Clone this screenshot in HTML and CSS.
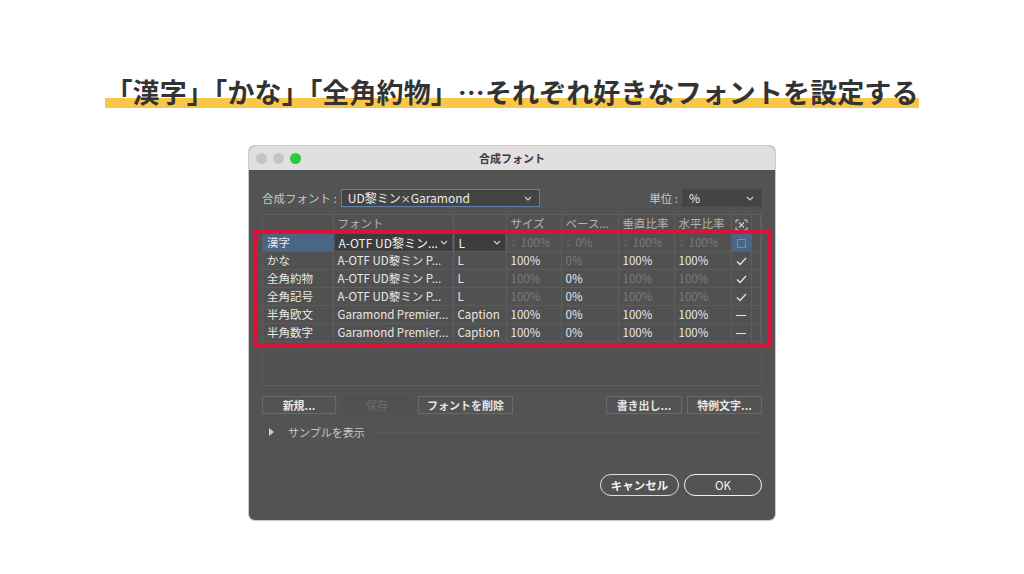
FILE: index.html
```html
<!DOCTYPE html>
<html lang="ja">

<head>
    <meta charset="UTF-8">
    <meta name="viewport" content="width=device-width, initial-scale=1.0">
    <title>合成フォント</title>
    <link rel="stylesheet" href="styles.css">
</head>

<body>
    <main class="page">
        <h1 class="headline"><span>「漢字」「かな」「全角約物」…それぞれ好きなフォントを設定する</span></h1>

        <section class="window">
            <div class="titlebar">
                <div class="lights">
                    <span class="light"></span>
                    <span class="light"></span>
                    <span class="light green"></span>
                </div>
                <div class="title">合成フォント</div>
            </div>

            <div class="window_inner">
                <div class="form-row">
                    <div class="field">
                        <label>合成フォント :</label>
                        <div class="select select-font focus">UD黎ミン<span class="times">×</span>Garamond
                            <svg class="chev" width="8" height="5" viewBox="0 0 8 5"><path d="M1 1l3 3 3-3" fill="none" stroke="#cfcfcf" stroke-width="1.2"/></svg>
                        </div>
                    </div>
                    <div class="field">
                        <label>単位 :</label>
                        <div class="select select-unit">%
                            <svg class="chev" width="8" height="5" viewBox="0 0 8 5"><path d="M1 1l3 3 3-3" fill="none" stroke="#cfcfcf" stroke-width="1.2"/></svg>
                        </div>
                    </div>
                </div>

                <div class="table-wrap">
                    <table class="ft-table">
                        <colgroup>
                            <col style="width:70px">
                            <col style="width:120px">
                            <col style="width:53px">
                            <col style="width:55px">
                            <col style="width:57px">
                            <col style="width:56px">
                            <col style="width:57px">
                            <col style="width:20px">
                            <col>
                        </colgroup>
                        <thead>
                            <tr>
                                <th></th>
                                <th>フォント</th>
                                <th></th>
                                <th>サイズ</th>
                                <th>ベース...</th>
                                <th>垂直比率</th>
                                <th>水平比率</th>
                                <th class="icon-col">
                                    <svg width="13" height="12" viewBox="0 0 13 12">
                                        <path d="M1 4V1h3M9 1h3v3M12 8v3H9M4 11H1V8" fill="none" stroke="#cfcfcf" stroke-width="1"/>
                                        <path d="M4 3.5l5 5M9 3.5l-5 5" stroke="#cfcfcf" stroke-width="1.1"/>
                                    </svg>
                                </th>
                                <th></th>
                            </tr>
                        </thead>
                        <tbody>
                            <tr class="active">
                                <td class="sel">漢字</td>
                                <td class="pad1"><div class="cell-select">A-OTF UD黎ミン...
                                    <svg class="chev" width="8" height="5" viewBox="0 0 8 5"><path d="M1 1l3 3 3-3" fill="none" stroke="#cfcfcf" stroke-width="1.2"/></svg>
                                </div></td>
                                <td class="pad1"><div class="cell-select">L
                                    <svg class="chev" width="8" height="5" viewBox="0 0 8 5"><path d="M1 1l3 3 3-3" fill="none" stroke="#cfcfcf" stroke-width="1.2"/></svg>
                                </div></td>
                                <td class="dim"><svg class="spin" width="6" height="10" viewBox="0 0 6 10"><path d="M1 4l2-2.5L5 4M1 6l2 2.5L5 6" fill="none" stroke="#6a6a6a" stroke-width="1"/></svg>100%</td>
                                <td class="dim"><svg class="spin" width="6" height="10" viewBox="0 0 6 10"><path d="M1 4l2-2.5L5 4M1 6l2 2.5L5 6" fill="none" stroke="#6a6a6a" stroke-width="1"/></svg>0%</td>
                                <td class="dim"><svg class="spin" width="6" height="10" viewBox="0 0 6 10"><path d="M1 4l2-2.5L5 4M1 6l2 2.5L5 6" fill="none" stroke="#6a6a6a" stroke-width="1"/></svg>100%</td>
                                <td class="dim"><svg class="spin" width="6" height="10" viewBox="0 0 6 10"><path d="M1 4l2-2.5L5 4M1 6l2 2.5L5 6" fill="none" stroke="#6a6a6a" stroke-width="1"/></svg>100%</td>
                                <td class="sel icon-col"><span class="box"></span></td>
                                <td></td>
                            </tr>
                            <tr>
                                <td>かな</td>
                                <td>A-OTF UD黎ミン P...</td>
                                <td>L</td>
                                <td>100%</td>
                                <td class="dim">0%</td>
                                <td>100%</td>
                                <td>100%</td>
                                <td class="icon-col"><svg width="11" height="9" viewBox="0 0 11 9"><path d="M1 4.5l3 3L10 1" fill="none" stroke="#e4e4e4" stroke-width="1.3"/></svg></td>
                                <td></td>
                            </tr>
                            <tr>
                                <td>全角約物</td>
                                <td>A-OTF UD黎ミン P...</td>
                                <td>L</td>
                                <td class="dim">100%</td>
                                <td>0%</td>
                                <td class="dim">100%</td>
                                <td class="dim">100%</td>
                                <td class="icon-col"><svg width="11" height="9" viewBox="0 0 11 9"><path d="M1 4.5l3 3L10 1" fill="none" stroke="#e4e4e4" stroke-width="1.3"/></svg></td>
                                <td></td>
                            </tr>
                            <tr>
                                <td>全角記号</td>
                                <td>A-OTF UD黎ミン P...</td>
                                <td>L</td>
                                <td class="dim">100%</td>
                                <td>0%</td>
                                <td class="dim">100%</td>
                                <td class="dim">100%</td>
                                <td class="icon-col"><svg width="11" height="9" viewBox="0 0 11 9"><path d="M1 4.5l3 3L10 1" fill="none" stroke="#e4e4e4" stroke-width="1.3"/></svg></td>
                                <td></td>
                            </tr>
                            <tr>
                                <td>半角欧文</td>
                                <td>Garamond Premier...</td>
                                <td>Caption</td>
                                <td>100%</td>
                                <td>0%</td>
                                <td>100%</td>
                                <td>100%</td>
                                <td class="icon-col"><span class="dash"></span></td>
                                <td></td>
                            </tr>
                            <tr>
                                <td>半角数字</td>
                                <td>Garamond Premier...</td>
                                <td>Caption</td>
                                <td>100%</td>
                                <td>0%</td>
                                <td>100%</td>
                                <td>100%</td>
                                <td class="icon-col"><span class="dash"></span></td>
                                <td></td>
                            </tr>
                        </tbody>
                    </table>
                    <div class="highlight"></div>
                </div>

                <div class="btn-row">
                    <div class="btn-group">
                        <button class="btn w74">新規...</button>
                        <button class="btn w72 disabled">保存</button>
                        <button class="btn w95">フォントを削除</button>
                    </div>
                    <div class="btn-group">
                        <button class="btn w76">書き出し...</button>
                        <button class="btn w75">特例文字...</button>
                    </div>
                </div>

                <div class="sample">
                    <span class="tri"></span>
                    <span>サンプルを表示</span>
                    <span class="rule"></span>
                </div>

                <div class="footer">
                    <button class="pill">キャンセル</button>
                    <button class="pill ok">OK</button>
                </div>
            </div>
        </section>
    </main>
</body>

</html>
```

FILE: styles.css
```css
* {
    margin: 0;
    padding: 0;
    box-sizing: border-box;
}

body {
    width: 1024px;
    height: 574px;
    overflow: hidden;
    background: #ffffff;
    font-family: "Noto Sans CJK JP", "Noto Sans", sans-serif;
}

.page {
    display: flex;
    flex-direction: column;
    align-items: center;
    padding-top: 74px;
}

.headline {
    font-size: 27px;
    font-weight: 700;
    color: #333333;
    line-height: 36px;
    letter-spacing: 0.1px;
    background: linear-gradient(to bottom, transparent 0, transparent 24px, #fac648 24px, #fac648 34px, transparent 34px);
}

/* dialog window */
.window {
    margin-top: 36px;
    width: 526px;
    height: 374px;
    border-radius: 6px;
    overflow: hidden;
    background: #535353;
    box-shadow: 0 0 0 1px #c8c8c8;
}

.titlebar {
    position: relative;
    height: 24px;
    background: #e1dfdf;
    display: flex;
    align-items: center;
    justify-content: center;
}

.lights {
    position: absolute;
    left: 7px;
    top: 7px;
    display: flex;
    gap: 6px;
}

.light {
    width: 11px;
    height: 11px;
    border-radius: 50%;
    background: #c6c4c4;
}

.light.green {
    background: #2bc840;
}

.title {
    font-size: 11px;
    font-weight: 700;
    color: #3a3a3a;
}

.window_inner {
    padding: 19px 13px 25px;
    color: #dedede;
    font-size: 11.5px;
}

.form-row {
    display: flex;
    justify-content: space-between;
    align-items: center;
    height: 18px;
}

.field {
    display: flex;
    align-items: center;
}

.field label {
    color: #c8c8c8;
    font-size: 11.5px;
    margin-right: 4px;
}

.select {
    position: relative;
    height: 18px;
    line-height: 16px;
    background: #444444;
    color: #ececec;
    padding-left: 6px;
    font-size: 12px;
    border: 1px solid #484848;
}

.select.focus {
    border-color: #5e7fa8;
}

.select .times {
    font-size: 10px;
}

.select-font {
    width: 199px;
}

.select-unit {
    width: 80px;
}

.chev {
    position: absolute;
    right: 7px;
    top: 6px;
}

/* table */
.table-wrap {
    position: relative;
    margin-top: 7px;
    height: 172px;
    background: #515151;
    border: 1px solid #5e5e5e;
}

.ft-table {
    width: 100%;
    border-collapse: collapse;
    table-layout: fixed;
}

.ft-table th,
.ft-table td {
    height: 18px;
    padding: 0 4px;
    border-right: 1px solid #5f5f5f;
    border-bottom: 1px solid #5c5c5c;
    white-space: nowrap;
    overflow: hidden;
    text-align: left;
    font-size: 11.5px;
    line-height: 17px;
}

.ft-table th {
    font-weight: 400;
    color: #b4b4b4;
}

.ft-table td {
    color: #e8e8e8;
}

.ft-table td.dim {
    color: #7b7b7b;
}

.ft-table td.pad1 {
    padding: 0 1px;
}

.ft-table .icon-col {
    text-align: center;
    padding: 0;
}

.ft-table .icon-col svg {
    vertical-align: middle;
}

.ft-table td.sel {
    background: #4b6584;
    color: #e4e8ee;
}

.cell-select {
    position: relative;
    height: 17px;
    padding-left: 4px;
    background: #3c3c3c;
    color: #f0f0f0;
    font-size: 12px;
    line-height: 17px;
}

.cell-select .chev {
    right: 4px;
}

.spin {
    margin-right: 4px;
    vertical-align: -1px;
}

.box {
    display: inline-block;
    width: 9px;
    height: 9px;
    border: 1px solid #7590b0;
    vertical-align: middle;
}

.dash {
    display: inline-block;
    width: 10px;
    height: 1.5px;
    background: #e4e4e4;
    vertical-align: middle;
}

.highlight {
    position: absolute;
    left: -10px;
    top: 15px;
    width: 518px;
    height: 118px;
    border: 4px solid #d8133c;
    pointer-events: none;
}

/* buttons */
.btn-row {
    display: flex;
    justify-content: space-between;
    margin-top: 10px;
}

.btn-group {
    display: flex;
    gap: 5px;
}

.btn {
    height: 18px;
    border: 1px solid #6a6a6a;
    background: #535353;
    color: #e6e6e6;
    font-family: inherit;
    font-size: 11px;
    font-weight: 700;
    line-height: 16px;
}

.btn.disabled {
    border-color: #4f4f4f;
    background: #515151;
    color: #6e6e6e;
    font-weight: 400;
}

.w72 { width: 72px; }
.w74 { width: 74px; }
.w75 { width: 75px; }
.w76 { width: 76px; }
.w95 { width: 95px; }

.sample {
    display: flex;
    align-items: center;
    height: 16px;
    margin-top: 10px;
    padding-left: 7px;
    color: #c8c8c8;
    font-size: 11px;
}

.tri {
    width: 0;
    height: 0;
    border-top: 4px solid transparent;
    border-bottom: 4px solid transparent;
    border-left: 5px solid #cfcfcf;
    margin-right: 14px;
}

.rule {
    flex: 1;
    height: 1px;
    margin-left: 6px;
    background: #5a5a5a;
}

.footer {
    display: flex;
    justify-content: flex-end;
    gap: 5px;
    margin-top: 34px;
}

.pill {
    height: 22px;
    border-radius: 11px;
    border: 1.5px solid #dcdcdc;
    background: #535353;
    color: #f2f2f2;
    font-family: inherit;
    font-size: 11.5px;
    font-weight: 700;
    width: 79px;
}

.pill.ok {
    width: 78px;
    font-weight: 400;
    border-color: #f0f0f0;
}
```
